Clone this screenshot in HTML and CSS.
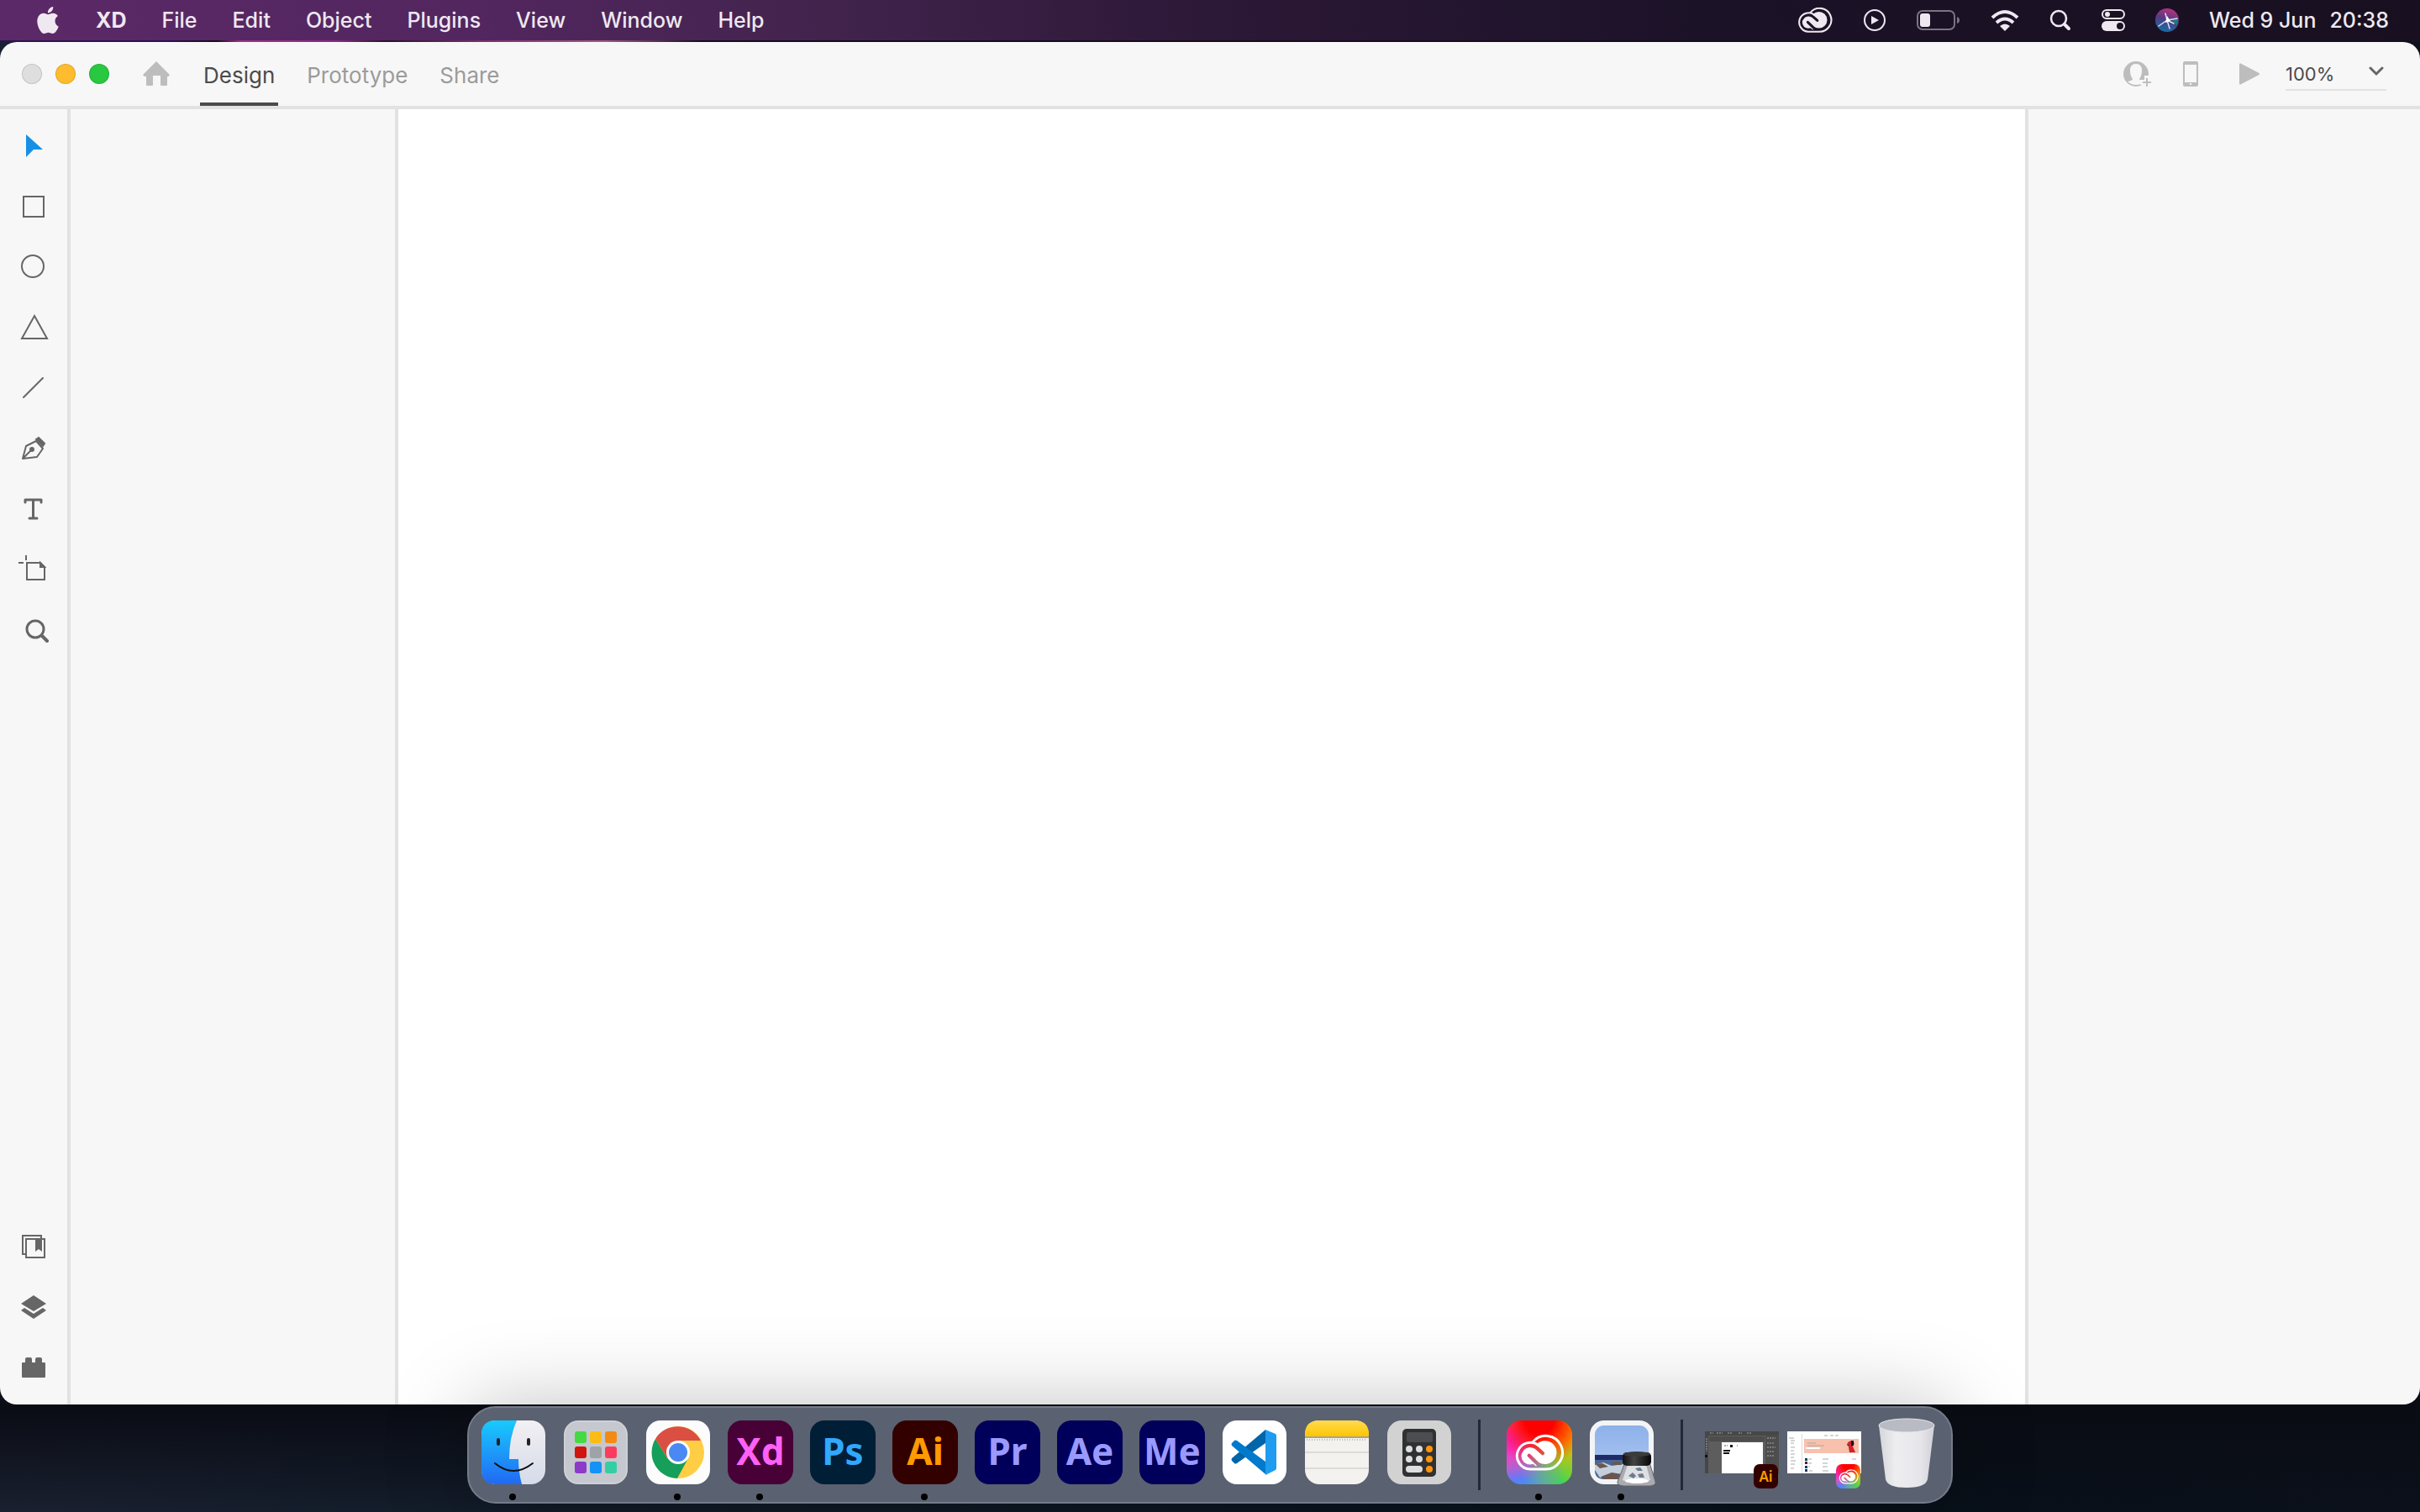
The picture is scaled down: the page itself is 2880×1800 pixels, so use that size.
FILE: index.html
```
<!DOCTYPE html>
<html lang="en">
<head>
    <meta charset="UTF-8">
    <meta name="viewport" content="width=device-width, initial-scale=1.0">
    <title>XD</title>
    <link rel="stylesheet" href="styles.css">
</head>
<body>
    <!-- shared shapes -->
    <svg class="defs" aria-hidden="true">
        <defs>
            <mask id="cc-mask" maskUnits="userSpaceOnUse" x="0" y="0" width="180" height="136">
                <circle cx="56" cy="79" r="31" fill="#fff"/>
                <circle cx="110" cy="67" r="42" fill="#fff"/>
                <path d="M56 79L88 106" stroke="#fff" stroke-width="30"/>
                <path d="M24 62A36 36 0 0 1 80 50L102 70" fill="none" stroke="#000" stroke-width="13" stroke-linecap="round"/>
                <path d="M92 116L53 78" stroke="#000" stroke-width="13" stroke-linecap="round"/>
                <path d="M57 127A48 48 0 1 1 88 42M66 30A60 60 0 1 1 110 127H57" fill="none" stroke="#fff" stroke-width="9"/>
            </mask>
            <symbol id="cc-logo" viewBox="0 0 180 136">
                <rect width="180" height="136" fill="currentColor" mask="url(#cc-mask)"/>
            </symbol>
        </defs>
    </svg>

    <header class="menubar">
        <nav class="menus">
            <button aria-label="Apple menu"><svg width="26" height="32" viewBox="2 0 20 24" preserveAspectRatio="none"><path fill="currentColor" d="M12.152 6.896c-.948 0-2.415-1.078-3.96-1.04-2.04.027-3.91 1.183-4.961 3.014-2.117 3.675-.546 9.103 1.519 12.09 1.013 1.454 2.208 3.09 3.792 3.039 1.52-.065 2.09-.987 3.935-.987 1.831 0 2.35.987 3.96.948 1.637-.026 2.676-1.48 3.676-2.948 1.156-1.688 1.636-3.325 1.662-3.415-.039-.013-3.182-1.221-3.22-4.857-.026-3.04 2.48-4.494 2.597-4.559-1.429-2.09-3.623-2.324-4.39-2.376-2-.156-3.675 1.09-4.61 1.09zM15.53 3.83c.843-1.012 1.4-2.427 1.245-3.83-1.207.052-2.662.805-3.532 1.818-.78.896-1.454 2.338-1.273 3.714 1.338.104 2.715-.688 3.559-1.701"/></svg></button>
            <button class="app-name">XD</button>
            <button>File</button>
            <button>Edit</button>
            <button>Object</button>
            <button>Plugins</button>
            <button>View</button>
            <button>Window</button>
            <button>Help</button>
        </nav>
        <div class="status">
            <button aria-label="Creative Cloud"><svg width="42" height="32"><use href="#cc-logo"/></svg></button>
            <button aria-label="Now playing"><svg width="28" height="28" viewBox="0 0 28 28"><circle cx="14" cy="14" r="12" fill="none" stroke="currentColor" stroke-width="2"/><path d="M10 9v10l9-5z" fill="currentColor"/></svg></button>
            <button aria-label="Battery"><svg width="52" height="26" viewBox="0 0 52 26"><rect x="1" y="2" width="44" height="22" rx="6" fill="none" stroke="#7b7482" stroke-width="2"/><rect x="4" y="5" width="12" height="16" rx="3" fill="currentColor"/><path d="M48 9q3 1 3 4t-3 4z" fill="#7b7482"/></svg></button>
            <button aria-label="Wi-Fi"><svg width="34" height="26" viewBox="0 0 34 26"><g fill="none" stroke="currentColor" stroke-width="4"><path d="M2 10Q17-4 32 10"/><path d="M7 16Q17 7 27 16"/></g><path d="M17 26l-6-6q6-5 12 0z" fill="currentColor"/></svg></button>
            <button aria-label="Spotlight"><svg width="26" height="26" viewBox="0 0 26 26" fill="none" stroke="currentColor" stroke-linecap="round"><circle cx="11" cy="11" r="9" stroke-width="2.500"/><path d="M18 18l5 5" stroke-width="4"/></svg></button>
            <button aria-label="Control Center"><svg width="28" height="28" viewBox="0 0 28 28"><rect x="1" y="2" width="26" height="10" rx="5" fill="none" stroke="currentColor" stroke-width="2"/><circle cx="7" cy="7" r="3" fill="currentColor"/><rect y="15" width="28" height="12" rx="6" fill="currentColor"/><circle cx="22" cy="21" r="4" fill="#1a1224"/></svg></button>
            <button aria-label="Siri"><svg width="28" height="28" viewBox="0 0 28 28">
                <defs><linearGradient id="siri" x1=".6" x2=".3" y2="1"><stop stop-color="#b8317f"/><stop offset=".45" stop-color="#573a80"/><stop offset="1" stop-color="#146fa8"/></linearGradient></defs>
                <circle cx="14" cy="14" r="14" fill="url(#siri)"/>
                <path d="M20 15l7-3-1 8z" fill="#1b7d80"/>
                <path d="M14 14L4 21M14 14l12-2M14 14l3 10M14 14L12 6M14 14l8 4" stroke="#c8eaf2" stroke-width="1.500" stroke-linecap="round"/>
                <path d="M14 9l4 6-6 2z" fill="#fff"/></svg></button>
            <time datetime="2021-06-09T20:38"><span>Wed 9 Jun</span><span>20:38</span></time>
        </div>
    </header>

    <main class="window">
        <div class="titlebar">
            <div class="lights">
                <button class="close" aria-label="Close"></button>
                <button class="minimise" aria-label="Minimise"></button>
                <button class="zoom" aria-label="Zoom"></button>
            </div>
            <button class="home" aria-label="Home"><svg width="32" height="30" viewBox="0 0 32 30"><path fill="#bdbdbd" d="M16 0l15 15q2 3-2 3v10q0 1-1 1h-6q-1 0-1-1V17H12v11q0 1-1 1H5q-1 0-1-1V18q-5 0-3-3z"/></svg></button>
            <nav class="tabs">
                <button class="active">Design</button>
                <button>Prototype</button>
                <button>Share</button>
            </nav>
            <div class="actions">
                <button aria-label="Invite"><svg width="34" height="32" viewBox="0 0 34 32"><circle cx="15" cy="16" r="15" fill="#bdbdbd"/><path fill="#f7f7f7" d="M11 22q-3-4-3-10 0-8 7-8t7 8q0 6-3 10 0 2 6 3-4 4-10 4T5 25q6-1 6-3z"/><path stroke="#f7f7f7" stroke-width="6" d="M28 18v14M20 26h14"/><path stroke="#bdbdbd" stroke-width="2" d="M28 21v10M23 26h10"/></svg></button>
                <button aria-label="Preview on device"><svg width="18" height="30" viewBox="0 0 18 30"><rect width="18" height="30" rx="2" fill="#bdbdbd"/><path fill="#f7f7f7" d="M2 4h14v21H2zM8 26h2v2H8z"/></svg></button>
                <button aria-label="Play"><svg width="24" height="26" viewBox="0 0 24 26"><path d="M0 1.500Q0 0 1.500 .5L23.500 12q1 1 0 2L1.500 25.500Q0 26 0 24.500z" fill="#bdbdbd"/></svg></button>
                <div class="scale">
                    <select aria-label="Zoom level"><option>100%</option><option>50%</option><option>200%</option></select>
                    <svg width="18" height="12" viewBox="0 0 18 12"><path d="M2 2l7 7 7-7" fill="none" stroke="#666" stroke-width="3" stroke-linecap="round"/></svg>
                </div>
            </div>
        </div>

        <div class="workspace">
            <aside class="tools">
                <div class="group">
                    <button aria-label="Select"><svg viewBox="0 0 40 40"><path d="M11 6l20 18H20l-9 9z" fill="#1590e6"/></svg></button>
                    <button aria-label="Rectangle"><svg viewBox="0 0 40 40"><rect x="8" y="8" width="24" height="24"/></svg></button>
                    <button aria-label="Ellipse"><svg viewBox="0 0 40 40"><circle cx="19" cy="19" r="13"/></svg></button>
                    <button aria-label="Polygon"><svg viewBox="0 0 40 40"><path d="M21 6l15 27H6z"/></svg></button>
                    <button aria-label="Line"><svg viewBox="0 0 40 40"><path d="M8 31L31 8" stroke-linecap="round"/></svg></button>
                    <button aria-label="Pen"><svg viewBox="0 0 40 40"><path d="M7 32l4-15 12-6 8 9-7 10zM7 32l11-11" stroke-linejoin="round"/><circle cx="18" cy="21" r="2" fill="#666"/><path d="M23 9l3-2 7 7-2 3z" fill="#666"/></svg></button>
                    <button aria-label="Text"><svg viewBox="0 0 40 40"><path d="M10 12V9h19v3M19.500 9v22M15 31h9" stroke-width="3" stroke-linecap="round" stroke-linejoin="round"/></svg></button>
                    <button aria-label="Artboard"><svg viewBox="0 0 40 40"><path d="M12 12h16l5 5v15H12zM11 3v6M2 12h6"/><path d="M28 12v5h5z" fill="#666"/></svg></button>
                    <button aria-label="Zoom"><svg viewBox="0 0 40 40"><circle cx="22" cy="19" r="10" stroke-width="3"/><path d="M30 27l6 6" stroke-width="4" stroke-linecap="round"/></svg></button>
                </div>
                <div class="group">
                    <button aria-label="Libraries"><svg viewBox="0 0 40 40"><path d="M10 29H7V7h22v4M11 11h22v22H11z"/><path d="M22 11h8v15l-4-3-4 3z" fill="#666" stroke="none"/></svg></button>
                    <button aria-label="Layers"><svg viewBox="0 0 40 40"><path d="M20 6l15 10-15 9L5 16zM9 21l11 7 11-7 4 3-15 10L5 24z" fill="#666" stroke="none"/></svg></button>
                    <button aria-label="Plugins"><svg viewBox="0 0 40 40"><path d="M6 15q0-1 1-1h3v-4q0-2 2-2h4q2 0 2 2v4h4v-4q0-2 2-2h4q2 0 2 2v4h3q1 0 1 1v16q0 1-1 1H7q-1 0-1-1z" fill="#666" stroke="none"/></svg></button>
                </div>
            </aside>
            <section class="canvas">
                <div class="artboard"></div>
            </section>
        </div>
    </main>

    <footer class="dock-area">
        <div class="dock">
            <button class="app running" aria-label="Finder"><svg viewBox="0 0 76 76">
                <defs>
                    <linearGradient id="finder" x2="0" y2="1"><stop stop-color="#19cafd"/><stop offset="1" stop-color="#2169f3"/></linearGradient>
                    <linearGradient id="finder2" x2="0" y2="1"><stop stop-color="#f2f0f3"/><stop offset="1" stop-color="#d5dbe9"/></linearGradient>
                </defs>
                <rect width="76" height="76" rx="17" fill="url(#finder2)"/>
                <path d="M42 0H17Q0 0 0 17v42q0 17 17 17h31q-4-15-4-30H33Q33 20 42 0z" fill="url(#finder)"/>
                <path d="M20 23v5M56 23v5" stroke="#222" stroke-width="4" stroke-linecap="round"/><path d="M16 51q22 18 45 0" fill="none" stroke="#111" stroke-width="2" stroke-linecap="round"/></svg></button>
            <button class="app" aria-label="Launchpad"><svg viewBox="0 0 76 76">
                <rect width="76" height="76" rx="17" fill="#c5c8ce"/><rect x="1" y="1" width="74" height="74" rx="16" fill="none" stroke="#d6d9dd"/>
                <rect x="13" y="13" width="14" height="14" rx="3" fill="#45da43"/><rect x="31" y="13" width="14" height="14" rx="3" fill="#fdbb16"/><rect x="49" y="13" width="14" height="14" rx="3" fill="#f28a14"/>
                <rect x="13" y="31" width="14" height="14" rx="3" fill="#d0150f"/><rect x="31" y="31" width="14" height="14" rx="3" fill="#9da3a6"/><rect x="49" y="31" width="14" height="14" rx="3" fill="#fb3d5d"/>
                <rect x="13" y="49" width="14" height="14" rx="3" fill="#8c3bc8"/><rect x="31" y="49" width="14" height="14" rx="3" fill="#1592f6"/><rect x="49" y="49" width="14" height="14" rx="3" fill="#35cda4"/></svg></button>
            <button class="app running" aria-label="Chrome"><svg viewBox="0 0 76 76">
                <rect width="76" height="76" rx="17" fill="#fcfcfc"/>
                <circle cx="38" cy="38" r="31" fill="#ffce44"/>
                <path d="M65 24A31 31 0 0 0 11 22l14 23 13-21z" fill="#db4f42"/>
                <path d="M11 22a31 31 0 0 0 26 47l12-22-11 4-13-6z" fill="#169e5b"/>
                <circle cx="38" cy="38" r="14" fill="#fff"/><circle cx="38" cy="38" r="11" fill="#4a89f3"/></svg></button>
            <button class="app adobe xd running">Xd</button>
            <button class="app adobe ps">Ps</button>
            <button class="app adobe ai running">Ai</button>
            <button class="app adobe pr">Pr</button>
            <button class="app adobe pr">Ae</button>
            <button class="app adobe pr">Me</button>
            <button class="app" aria-label="Visual Studio Code"><svg viewBox="0 0 76 76">
                <rect width="76" height="76" rx="17" fill="#fff"/>
                <path d="M51 11v16L17 51q-2 1-3 0l-3-3q-1-2 0-3z" fill="#0065a9"/>
                <path d="M51 64V49L17 24q-2-1-3 0l-3 3q-1 2 0 3z" fill="#007acc"/>
                <path d="M51 11l12 5q1 1 1 2v39q0 1-1 2l-12 6z" fill="#1f9cf0"/></svg></button>
            <button class="app" aria-label="Notes"><svg viewBox="0 0 76 76">
                <defs><linearGradient id="notes" x2="0" y2="1"><stop stop-color="#ffdb52"/><stop offset="1" stop-color="#fec600"/></linearGradient></defs>
                <rect width="76" height="76" rx="17" fill="#f3f2ef"/><path d="M0 19v-2Q0 0 17 0h42q17 0 17 17v2z" fill="url(#notes)"/>
                <path d="M0 20h76" stroke="#aaa290" stroke-width="2"/><path d="M2 23h72" stroke="#bbb" stroke-dasharray="1 2" stroke-width="2"/><path d="M0 38h76M0 57h76" stroke="#dddbd8" stroke-width="2"/></svg></button>
            <button class="app" aria-label="Calculator"><svg viewBox="0 0 76 76">
                <rect width="76" height="76" rx="17" fill="#d1d2d1"/><rect x="18" y="10" width="40" height="57" rx="5" fill="#303132"/><rect x="23" y="14" width="31" height="12" rx="2" fill="#4c4d50"/>
                <g fill="#dedede"><circle cx="26" cy="34" r="4"/><circle cx="38" cy="34" r="4"/><circle cx="26" cy="46" r="4"/><circle cx="38" cy="46" r="4"/><rect x="22" y="54" width="20" height="8" rx="4"/></g>
                <g fill="#ff950c"><circle cx="50" cy="34" r="4"/><circle cx="50" cy="46" r="4"/><circle cx="50" cy="58" r="4"/></g></svg></button>
            <hr>
            <button class="app adobe cc running" aria-label="Creative Cloud"><svg viewBox="0 0 180 136"><use href="#cc-logo"/></svg></button>
            <button class="app running" aria-label="Preview"><svg viewBox="0 0 76 76">
                <defs>
                    <linearGradient id="sky" x2="0" y2="1"><stop stop-color="#8db1ea"/><stop offset="1" stop-color="#b2caf2"/></linearGradient>
                    <linearGradient id="lid"><stop stop-color="#111"/><stop offset=".4" stop-color="#444"/><stop offset="1" stop-color="#050505"/></linearGradient>
                </defs>
                <rect width="76" height="76" rx="17" fill="#f3f4f6"/><rect x="6" y="6" width="64" height="64" rx="11" fill="url(#sky)"/>
                <path d="M6 41h64v18q0 11-11 11H17Q6 70 6 59z" fill="#4a6797"/><path d="M6 41h64v6H6z" fill="#1e2b67"/>
                <path d="M6 53l10-3 10 4 14-2v14l-28 2-6-9z" fill="#c3cfdd"/><path d="M7 52l8-1 7 4-10 2zM26 50l9-1 3 4h-10zM13 67l13-5 12 2-6 6H17z" fill="#6b564e"/>
                <path d="M42 50h29l7 23q1 4-6 5H40q-8-1-7-5z" fill="#a9abb1" stroke="#666" stroke-width="1"/><path d="M45 53l-6 18q18 8 33 0l-5-18z" fill="#dddfe3"/>
                <path d="M46 66l5-4 4 4-3 3zM57 64l6-1 2 5h-6zM54 57l6-1 3 4h-6z" fill="#6c7c8c"/><ellipse cx="56" cy="72" rx="14" ry="3" fill="#fff"/>
                <rect x="39" y="38" width="34" height="16" rx="5" fill="url(#lid)"/><ellipse cx="56" cy="40" rx="16" ry="3" fill="#3b3b3b"/></svg></button>
            <hr>
            <button class="app thumb" aria-label="Illustrator window"><svg viewBox="0 0 88 50">
                <path d="M0 0h88v50H0z" fill="#5d5d5d"/><path d="M0 0h88v5H0zM0 5h4v45H0z" fill="#474747"/><path d="M5 6h66v6H5zM72 5h16v45H72z" fill="#4d4d4d"/>
                <path d="M20 13h49v37H20z" fill="#fff"/><path d="M23 17h2M38 17h1M26 17h1" stroke="#c99" stroke-width="2"/><path d="M30 16h3v3h-3zM22 22h8v2h-8zM22 25h7v2h-7zM0 28h3v3H0z" fill="#111"/>
                <path d="M6 2h4M14 2h7M27 2h6M40 2h4M50 2h6M74 8h10M74 14h8M74 19h10M74 24h9M74 29h8M2 8v16" stroke="#aaa" stroke-width="1" stroke-dasharray="2 1"/></svg><span class="badge ai">Ai</span></button>
            <button class="app thumb" aria-label="Creative Cloud window"><svg viewBox="0 0 88 50">
                <path d="M0 0h88v50H0z" fill="#fff"/><path d="M17 3h1v47h-1z" fill="#ddd"/><path d="M20 9h65v17H20z" fill="#f7c1ae"/><path d="M22 19h17v2H22z" fill="#fff"/>
                <path d="M2 8h6M4 11h5M4 14h4M4 19h5M4 23h4M4 27h5M4 31h4M4 35h6M4 39h5M4 44h4M44 5h4M51 5h4M57 5h4M24 14h10M24 17h20M25 33h4M42 33h7M25 38h4M42 38h6M25 42h2M42 42h6M26 47h4M42 47h7M77 33h5" stroke="#aaa" stroke-width="1"/>
                <path d="M21 32h3v3h-3zM21 41h3v3h-3zM21 45h3v3h-3z" fill="#063d68"/><path d="M21 36h3v3h-3z" fill="#6b1414"/>
                <path d="M72 13l4-2 4 3-2 4 3 7h-7l-1-6z" fill="#d42127"/><path d="M76 11h3v6h-3zM71 14l2 2-1 2z" fill="#171322"/></svg><span class="badge cc"><svg viewBox="0 0 180 136"><use href="#cc-logo"/></svg></span></button>
            <button class="app bin" aria-label="Bin"><svg viewBox="0 0 68 84">
                <defs><linearGradient id="bin"><stop stop-color="#d4d5da"/><stop offset=".3" stop-color="#eeeef1"/><stop offset=".75" stop-color="#e6e6ea"/><stop offset="1" stop-color="#cfd0d6"/></linearGradient></defs>
                <path d="M1 9l8 64q2 10 25 10t25-10l8-64z" fill="url(#bin)"/><ellipse cx="34" cy="9" rx="33" ry="8" fill="#b9bbc4" stroke="#e9e9ee" stroke-width="1"/></svg></button>
        </div>
    </footer>
</body>
</html>
```
FILE: styles.css
```
* {
    box-sizing: border-box;
}
body {
    margin: 0;
    height: 100vh;
    display: flex;
    flex-direction: column;
    font-family: Inter, "Liberation Sans", sans-serif;
    background: linear-gradient(to bottom, transparent 90%, #0a0c14 93%, transparent), linear-gradient(to right, #1a2030, #121c29 20%, #0c1622 50%, #081019 80%, #0b101a);
    overflow: hidden;
}
button {
    padding: 0;
    border: none;
    background: none;
    font: inherit;
    color: inherit;
    cursor: pointer;
}
svg {
    display: block;
}
.defs {
    position: absolute;
    width: 0;
    height: 0;
}

/* menu bar */
.menubar {
    flex: none;
    display: flex;
    justify-content: space-between;
    height: 50px;
    border: 0 solid #160d20;
    border-bottom-width: 2px;
    border-image: linear-gradient(to right, #2a1450 7%, #160d20 9%, #a0308c 10%, #8a2a80 14%, #2a1030 16%, #7a3070 20%, #a05a80 25%, #160d20 29%) 2;
    background: linear-gradient(to right, #5b2967, #52265f 20%, #43244e 33%, #2c1837 50%, #1c1228 70%, #181020);
    color: #efe8f1;
    font-size: 25px;
    font-weight: 500;
}
.menus, .status {
    display: flex;
    align-items: center;
}
.menus {
    padding-left: 23px;
}
.menus button {
    padding: 0 21px;
}
.menus .app-name {
    padding-left: 23px;
    font-weight: 700;
}
.status {
    gap: 36px;
    padding-right: 37px;
}
.status time {
    display: flex;
    gap: 16px;
}

/* app window */
.window {
    flex: 1;
    min-height: 0;
    display: flex;
    flex-direction: column;
    border-radius: 20px;
    background: #f7f7f7;
    overflow: hidden;
}
.titlebar {
    flex: none;
    display: flex;
    align-items: center;
    height: 80px;
    padding: 0 40px 0 26px;
    border-bottom: 4px solid #e2e2e2;
}
.lights {
    display: flex;
    gap: 16px;
}
.lights button {
    width: 24px;
    height: 24px;
    border-radius: 50%;
    border: 1px solid rgba(0, 0, 0, 0.12);
}
.close {
    background: #dedede;
}
.minimise {
    background: #febc2e;
}
.zoom {
    background: #28c840;
}
.home {
    margin-left: 40px;
}
.tabs {
    display: flex;
    align-self: stretch;
    gap: 30px;
    margin-left: 36px;
    font-size: 26px;
    color: #9b9b9b;
}
.tabs button {
    padding: 6px 4px 0;
    border-bottom: 4px solid transparent;
}
.tabs .active {
    color: #4b4b4b;
    border-color: #4b4b4b;
}
.actions {
    display: flex;
    align-items: center;
    margin-left: auto;
    gap: 37px;
}
.actions button:nth-child(3) {
    margin-left: 12px;
}
.scale {
    position: relative;
    width: 120px;
    margin-left: -6px;
}
.scale select {
    width: 100%;
    height: 40px;
    padding: 2px 0 0;
    border: none;
    border-bottom: 2px solid #e2e2e2;
    background: none;
    appearance: none;
    font: inherit;
    font-size: 22px;
    color: #4b4b4b;
}
.scale svg {
    position: absolute;
    right: 3px;
    top: 11px;
    pointer-events: none;
}
.workspace {
    flex: 1;
    min-height: 0;
    display: flex;
}
.tools {
    width: 84px;
    padding: 8px 0;
    border-right: 4px solid #e2e2e2;
    display: flex;
    flex-direction: column;
    justify-content: space-between;
}
.group {
    display: flex;
    flex-direction: column;
}
.tools button {
    height: 72px;
    display: flex;
    align-items: center;
    justify-content: center;
}
.tools svg {
    width: 40px;
    height: 40px;
    fill: none;
    stroke: #666;
    stroke-width: 2;
}
.tools button:first-child svg path:only-child {
    stroke: none;
}
.canvas {
    flex: 1;
    display: grid;
    grid-template-columns: 386fr 1944fr 466fr;
}
.artboard {
    grid-column: 2;
    background: #fff;
    border: solid #e2e2e2;
    border-width: 0 4px;
}

/* dock */
.dock-area {
    flex: none;
    height: 128px;
    display: flex;
    justify-content: center;
    align-items: flex-start;
    padding-top: 2px;
    position: relative;
}
.dock {
    height: 116px;
    display: flex;
    align-items: center;
    padding: 0 4px;
    border: 2px solid #757c89;
    border-radius: 34px;
    background: #5a6171;
    box-shadow: 0 0 100px rgba(0, 0, 0, 0.25);
}
.dock hr {
    width: 3px;
    height: 84px;
    margin: 0 21px;
    border: none;
    background: #202839;
}
.app {
    position: relative;
    width: 98px;
    height: 112px;
    padding: 15px 11px 21px;
}
.app > svg {
    width: 76px;
    height: 76px;
    overflow: visible;
}
.running::after {
    content: "";
    position: absolute;
    left: 44px;
    bottom: 2px;
    width: 8px;
    height: 8px;
    border-radius: 50%;
    background: #000;
}
.adobe {
    width: 78px;
    height: 76px;
    margin: 0 10px 6px;
    padding: 0 0 4px;
    border-radius: 17px;
    font-family: "Noto Sans", sans-serif;
    font-size: 44px;
    font-weight: 700;
}
.adobe.running::after {
    left: 34px;
    bottom: -19px;
}
.xd {
    background: #470137;
    color: #ff61f6;
}
.ps {
    background: #001e36;
    color: #31a8ff;
}
.ai {
    background: #330000;
    color: #ff9a00;
}
.pr {
    background: #00005b;
    color: #9999ff;
}
.cc {
    background: radial-gradient(circle at 50% 0, #f00 20%, transparent 65%), radial-gradient(circle at 0 35%, #f531d8 10%, transparent 60%), radial-gradient(circle at 15% 100%, #3b91fa 10%, transparent 60%), radial-gradient(circle at 85% 100%, #3ddc4a, transparent 55%), #ffb400;
    color: #fff;
}
.cc svg {
    width: 60px;
    height: 45px;
    margin: 4px auto 0;
}
.thumb {
    padding: 28px 5px 34px;
}
.thumb > svg {
    width: 88px;
    height: 50px;
}
.badge {
    position: absolute;
    right: 6px;
    bottom: 16px;
    width: 29px;
    height: 29px;
    border-radius: 7px;
    display: flex;
    align-items: center;
    justify-content: center;
    font-family: "Noto Sans", sans-serif;
    font-size: 17px;
    font-weight: 600;
}
.badge svg {
    width: 24px;
    height: 18px;
    margin: 0;
}
.bin {
    padding: 12px 15px 16px;
}
.bin > svg {
    width: 68px;
    height: 84px;
}
```
